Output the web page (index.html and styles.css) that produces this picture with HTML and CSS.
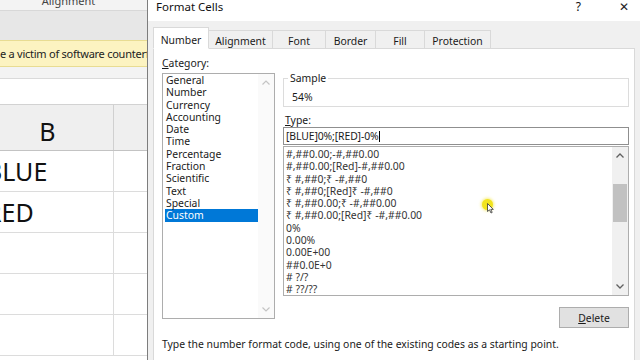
FILE: index.html
```html
<!DOCTYPE html>
<html lang="en">
<head>
  <meta charset="UTF-8" />
  <title>Format Cells</title>
  <link rel="stylesheet" href="styles.css">
</head>
<body>
  <div class="screen">
    <!-- Excel sheet behind the dialog -->
    <div class="sheet">
      <div class="ribbon"><span>Alignment</span></div>
      <div class="ribbon-gap"></div>
      <div class="msgbar">e a victim of software counterfeiting</div>
      <div class="formula-gap"></div>
      <div class="formula"></div>
      <div class="grid-row head">
        <div class="cell colB">B</div>
        <div class="cell colC"></div>
      </div>
      <div class="grid-row"><div class="cell colB">BLUE</div><div class="cell colC"></div></div>
      <div class="grid-row"><div class="cell colB">RED</div><div class="cell colC"></div></div>
      <div class="grid-row"><div class="cell colB"></div><div class="cell colC"></div></div>
      <div class="grid-row"><div class="cell colB"></div><div class="cell colC"></div></div>
      <div class="grid-row"><div class="cell colB"></div><div class="cell colC"></div></div>
    </div>

    <!-- Format Cells dialog -->
    <div class="dialog">
      <div class="titlebar">
        <span class="title">Format Cells</span>
        <span class="help">?</span>
        <span class="close">&#x2715;</span>
      </div>
      <div class="dlg-body">
        <div class="tabs">
          <div class="tab active" style="width:56px">Number</div>
          <div class="tab" style="width:64px">Alignment</div>
          <div class="tab" style="width:53px">Font</div>
          <div class="tab" style="width:50px">Border</div>
          <div class="tab" style="width:49px">Fill</div>
          <div class="tab" style="width:66px">Protection</div>
        </div>
        <div class="panel">
          <div class="left-col">
            <div class="label"><u>C</u>ategory:</div>
            <div class="listbox cat-list">
              <div class="items">
                <div>General</div>
                <div>Number</div>
                <div>Currency</div>
                <div>Accounting</div>
                <div>Date</div>
                <div>Time</div>
                <div>Percentage</div>
                <div>Fraction</div>
                <div>Scientific</div>
                <div>Text</div>
                <div>Special</div>
                <div class="selected">Custom</div>
              </div>
              <div class="scrollbar disabled">
                <div class="sb-btn"><svg width="8" height="5" viewBox="0 0 8 5"><polyline points="0.5,4.5 4,1 7.5,4.5" fill="none" stroke="#c4c4c4" stroke-width="1.2"/></svg></div>
                <div class="sb-track"></div>
                <div class="sb-btn"><svg width="8" height="5" viewBox="0 0 8 5"><polyline points="0.5,0.5 4,4 7.5,0.5" fill="none" stroke="#c4c4c4" stroke-width="1.2"/></svg></div>
              </div>
            </div>
          </div>

          <div class="right-col">
            <div class="sample">
              <span class="legend">Sample</span>
              <div class="sample-value">54%</div>
            </div>
            <div class="label type-label"><u>T</u>ype:</div>
            <div class="type-input">[BLUE]0%;[RED]-0%<span class="caret"></span></div>
            <div class="listbox fmt-list">
              <div class="items">
                <div>#,##0.00;-#,##0.00</div>
                <div>#,##0.00;[Red]-#,##0.00</div>
                <div>&#8377; #,##0;&#8377; -#,##0</div>
                <div>&#8377; #,##0;[Red]&#8377; -#,##0</div>
                <div>&#8377; #,##0.00;&#8377; -#,##0.00</div>
                <div>&#8377; #,##0.00;[Red]&#8377; -#,##0.00</div>
                <div>0%</div>
                <div>0.00%</div>
                <div>0.00E+00</div>
                <div>##0.0E+0</div>
                <div># ?/?</div>
                <div># ??/??</div>
              </div>
              <div class="scrollbar">
                <div class="sb-btn"><svg width="8" height="5" viewBox="0 0 8 5"><polyline points="0.5,4.5 4,1 7.5,4.5" fill="none" stroke="#606060" stroke-width="1.3"/></svg></div>
                <div class="sb-track"><div class="sb-thumb"></div></div>
                <div class="sb-btn"><svg width="8" height="5" viewBox="0 0 8 5"><polyline points="0.5,0.5 4,4 7.5,0.5" fill="none" stroke="#606060" stroke-width="1.3"/></svg></div>
              </div>
              <!-- mouse pointer highlight -->
              <div class="cursor-dot"></div>
              <svg class="cursor-arrow" width="7" height="11" viewBox="0 0 7 11"><path d="M0.5,0.5 L0.5,8.5 L2.5,6.8 L4,10 L5.2,9.4 L3.8,6.4 L6.3,6.4 Z" fill="#fff" stroke="#333" stroke-width="0.8"/></svg>
            </div>
            <div class="btn-row">
              <button class="btn"><u>D</u>elete</button>
            </div>
          </div>

          <div class="hint">Type the number format code, using one of the existing codes as a starting point.</div>
        </div>
      </div>
    </div>
  </div>
</body>
</html>
```

FILE: styles.css
```css
* { box-sizing: border-box; }
html, body { margin: 0; padding: 0; }
body {
  width: 640px;
  height: 360px;
  overflow: hidden;
  font-family: "Noto Sans", "Open Sans", sans-serif;
  font-size: 10.4px;
  color: #1a1a1a;
  background: #f0f0f0;
}
.screen { display: flex; height: 360px; }

/* Excel-Blatt im Hintergrund */
.sheet {
  width: 148px;
  flex: none;
  overflow: hidden;
  background: #fff;
  border-right: 1px solid #7d7d7d;
}
.ribbon {
  height: 11px;
  background: #f3f3f3;
  border-bottom: 1px solid #d8d8d8;
  overflow: hidden;
  text-align: center;
  padding-right: 10px;
}
.ribbon span { display: block; font-size: 11px; line-height: 11px; margin-top: -5px; color: #444; }
.ribbon-gap { height: 29px; background: #e7e7e7; }
.msgbar {
  height: 27px;
  background: #fcf3c1;
  border-top: 1px solid #e8dc92;
  border-bottom: 1px solid #e8dc92;
  font-size: 11px;
  letter-spacing: -0.25px;
  line-height: 25px;
  white-space: nowrap;
  overflow: hidden;
  color: #222;
}
.formula-gap { height: 11px; background: #f3f3f3; }
.formula { height: 27px; background: #fff; border-top: 1px solid #dadada; border-bottom: 1px solid #d2d2d2; }

.grid-row { display: flex; height: 41px; border-bottom: 1px solid #dcdcdc; margin-left: -18px; }
.grid-row.head { height: 46px; background: #efefef; border-bottom: 1px solid #c3c3c3; }
.cell {
  flex: none;
  border-right: 1px solid #dcdcdc;
  font-size: 25px;
  line-height: 40px;
  padding-left: 4px;
  color: #111;
}
.colB { width: 132px; }
.colC { width: 60px; }
.head .cell { text-align: center; line-height: 52px; padding-left: 0; font-size: 25px; border-right-color: #d0d0d0; }

/* Dialog */
.dialog { flex: 1; display: flex; flex-direction: column; background: #f0f0f0; }
.titlebar {
  height: 21px;
  flex: none;
  background: #fff;
  display: flex;
  align-items: flex-start;
  padding-left: 8px;
  font-size: 11.5px;
  line-height: 14px;
  color: #111;
}
.titlebar .help { margin-left: auto; font-size: 12px; margin-right: 38px; }
.titlebar .close { font-size: 12px; margin-right: 11px; color: #222; }

.dlg-body { flex: 1; padding: 6px 5px 0 5px; }
.tabs { display: flex; align-items: flex-end; height: 22px; position: relative; z-index: 1; }
.tab {
  height: 19px;
  background: #f0f0f0;
  border: 1px solid #d9d9d9;
  border-left: none;
  text-align: center;
  line-height: 18px;
  padding-top: 1px;
  color: #1a1a1a;
}
.tab.active {
  height: 22px;
  background: #fff;
  border-left: 1px solid #d9d9d9;
  border-bottom-color: #fff;
  line-height: 20px;
  padding-top: 2px;
}
.panel {
  margin-top: -1px;
  background: #fff;
  border: 1px solid #d9d9d9;
  height: 320px;
  display: grid;
  grid-template-columns: 113px 346px;
  column-gap: 8px;
  grid-template-rows: 271px auto;
  padding: 8px 0 0 8px;
}
.label { line-height: 13px; height: 13px; color: #1a1a1a; }

.listbox {
  position: relative;
  display: flex;
  border: 1px solid #adadad;
  background: #fff;
  line-height: 12.3px;
}
.listbox .items { flex: 1; padding-left: 2px; }
.cat-list { margin-top: 3px; height: 246px; }
.cat-list .items div { padding-left: 1px; }
.cat-list .selected { background: #0078d7; color: #fff; }

.scrollbar { width: 16px; display: flex; flex-direction: column; background: #f0f0f0; }
.scrollbar.disabled { background: #fafafa; }
.sb-btn { height: 17px; display: flex; align-items: center; justify-content: center; }
.sb-track { flex: 1; padding-top: 20px; }
.sb-thumb { width: 14px; height: 38px; margin: 0 auto; background: #c1c1c1; }

.sample {
  margin-top: 21px;
  height: 29px;
  border: 1px solid #dcdcdc;
  padding: 0 6px;
}
.sample .legend {
  display: block;
  width: max-content;
  margin: -7px 0 0 -2px;
  padding: 0 2px;
  background: #fff;
  line-height: 13px;
}
.sample-value { line-height: 13px; margin: 6px 0 0 2px; }
.type-label { margin-top: 7px; padding-left: 2px; }
.type-input {
  height: 18px;
  border: 1px solid #8f8f8f;
  line-height: 16px;
  padding-left: 2px;
  letter-spacing: -0.1px;
}
.caret { display: inline-block; width: 1px; height: 11px; background: #000; vertical-align: -2px; }
.fmt-list { margin-top: 1px; height: 150px; color: #333; }
.fmt-list .items { padding-top: 1px; padding-left: 2px; }

.cursor-dot {
  position: absolute;
  left: 198px;
  top: 52px;
  width: 11px;
  height: 11px;
  border-radius: 50%;
  background: #f1e31c;
  box-shadow: 0 0 3px 1px rgba(240, 225, 40, 0.6);
}
.cursor-arrow { position: absolute; left: 203px; top: 56px; }

.btn-row { display: flex; justify-content: flex-end; margin-top: 11px; }
.btn {
  width: 70px;
  height: 21px;
  background: #e1e1e1;
  border: 1px solid #adadad;
  font-family: inherit;
  font-size: 10.4px;
  color: #1a1a1a;
  padding: 0;
}
.hint { grid-column: 1 / 3; margin-top: 10px; line-height: 13px; padding-left: 0; }
```
